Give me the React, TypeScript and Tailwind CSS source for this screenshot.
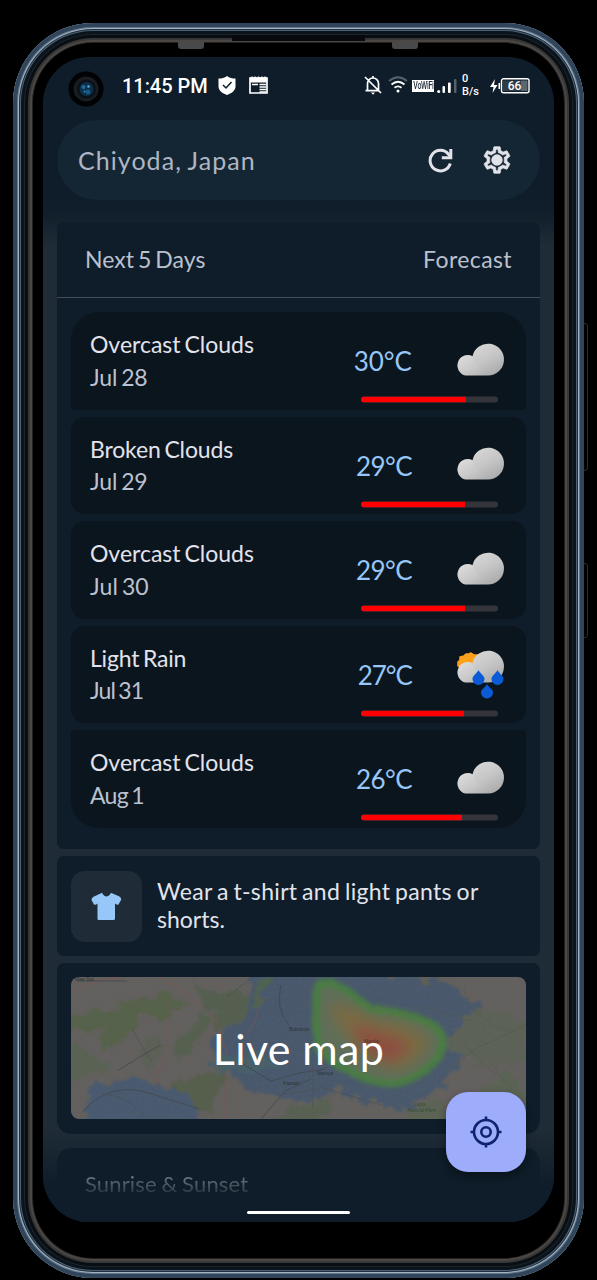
import React from "react";
import { MdOutlineSettings } from "react-icons/md";

const days = [
  { name: "Overcast Clouds", date: "Jul 28", temp: "30°C", fill: 77, rain: false, shape: "rounded-t-[28px] rounded-b-[4px]", nameTrack: "tracking-[0px]", dateTrack: "tracking-[-0.1px]", tempTrack: "tracking-[0px]" },
  { name: "Broken Clouds", date: "Jul 29", temp: "29°C", fill: 76, rain: false, shape: "rounded-[14px]", nameTrack: "tracking-[-0.15px]", dateTrack: "tracking-[-0.1px]", tempTrack: "tracking-[-0.6px]" },
  { name: "Overcast Clouds", date: "Jul 30", temp: "29°C", fill: 76, rain: false, shape: "rounded-[14px]", nameTrack: "tracking-[0px]", dateTrack: "tracking-[0.1px]", tempTrack: "tracking-[-0.6px]" },
  { name: "Light Rain", date: "Jul 31", temp: "27°C", fill: 75, rain: true, shape: "rounded-[14px]", nameTrack: "tracking-[-0.2px]", dateTrack: "tracking-[-0.8px]", tempTrack: "tracking-[-1px]" },
  { name: "Overcast Clouds", date: "Aug 1", temp: "26°C", fill: 74, rain: false, shape: "rounded-t-[4px] rounded-b-[28px]", nameTrack: "tracking-[0px]", dateTrack: "tracking-[-0.7px]", tempTrack: "tracking-[-0.6px]" },
];

function WeatherIcon({ rain }: { rain: boolean }) {
  return (
    <svg width="48" height="48" viewBox="0 0 48 48" className={rain ? "-mt-[2px] overflow-visible" : "mt-[10px] overflow-visible"}>
      <defs>
        <linearGradient id="cloud" x1="0.1" y1="0" x2="0.9" y2="1">
          <stop offset="0" stopColor="#dedede" />
          <stop offset="0.55" stopColor="#c6c6c6" />
          <stop offset="1" stopColor="#a6a6a6" />
        </linearGradient>
        <linearGradient id="cloudFront" x1="0" y1="0" x2="1" y2="1">
          <stop offset="0" stopColor="#ececec" />
          <stop offset="1" stopColor="#c9c9c9" stopOpacity="0" />
        </linearGradient>
      </defs>
      {rain && (
        <path d="M2 16 L2 12 L4 10 L4 7 L8 6 L10 4 L13 4 L15 3 L18 5 L23 5 L18 18 Z" fill="#ffa01c" stroke="#ffa01c" strokeWidth="1.5" strokeLinejoin="round" />
      )}
      <path d="M9.500 32.500a10.300 10.300 0 1 1 7-19.200A15.900 15.900 0 1 1 32 32.500Z" fill="url(#cloud)" />
      <path d="M9.500 32.500a10.300 10.300 0 1 1 7-19.200q1 6.700 9 11.700l6 7.500Z" fill="url(#cloudFront)" opacity="0.4" />
      {rain && (
        <g fill="#0b5bd7">
          <path d="M22.500 20c2 4 6 5.500 6 9a6 6 0 0 1-12 0c0-3.500 4-5 6-9Z" />
          <path d="M41.500 20c2 4 6 5.500 6 9a6 6 0 0 1-12 0c0-3.500 4-5 6-9Z" />
          <path d="M31 34c2 4 6 5 6 8.500a6 6 0 0 1-12 0c0-3.500 4-4.500 6-8.500Z" />
        </g>
      )}
    </svg>
  );
}

function StatusBar() {
  return (
    <div className="flex h-[63px] shrink-0 items-start pl-[25px] pr-[24px] pt-[14px] text-white">
      <svg width="36" height="36" viewBox="0 0 36 36">
        <circle cx="18" cy="18" r="17.500" fill="#010204" />
        <circle cx="18" cy="18" r="12.500" fill="#191c20" />
        <circle cx="18.500" cy="18" r="9.500" fill="#0b1119" />
        <circle cx="18.500" cy="18" r="7" fill="#0d304a" />
        <circle cx="15.500" cy="16" r="2" fill="#1e6b98" />
        <circle cx="20" cy="21" r="2.400" fill="#195a84" />
        <circle cx="20.500" cy="15.500" r="1.300" fill="#5ea5c8" />
        <circle cx="16.500" cy="20.500" r="1" fill="#3c8ab4" />
      </svg>
      <div className="ml-[18px] mt-[3px] w-[92px] whitespace-nowrap font-['Roboto'] text-[20px] font-medium leading-[24px] tracking-[-0.05px]">11:45 PM</div>
      <svg className="mt-[4px] ml-[2.500px]" width="20" height="22" viewBox="0 0 20 22">
        <path d="M10 1c2.500 2 5 2.500 8.500 2.500v8c0 4-4 7-8.500 8.500C5.500 18.500 1.500 15.500 1.500 11.500v-8C5 3.500 7.500 3 10 1Z" fill="#fff" />
        <path d="m6 10 3 3 5.500-6" fill="none" stroke="#0e1d29" strokeWidth="1.500" />
      </svg>
      <svg className="mt-[5px] ml-[12px]" width="19" height="19" viewBox="0 0 19 19">
        <path d="M1 2h17v15H1Z" fill="none" stroke="#fff" strokeWidth="1.700" />
        <path d="M1 1.500h17v5H1Z" fill="#fff" />
        <path d="M3 2V.500M6 2V.500M9.500 2V.500M13 2V.500M16 2V.500" stroke="#fff" strokeWidth="1.400" />
        <path d="M3 8.500h6M10.500 8.500h6.500M10.500 11h6.500M10.500 13.500h6.500M10.500 16h6.500" stroke="#fff" strokeWidth="1.300" />
      </svg>
      <div className="flex-1" />
      <svg className="mt-[4px]" width="20" height="21" viewBox="0 0 20 21" fill="none" stroke="#fff" strokeWidth="1.700">
        <path d="M4.500 15.500V8.500a5.500 5.500 0 0 1 11 0v7M2.500 15.700h13.500M2 2l16 16M10 1v2" />
        <path d="M8 17.500h4l-2 2.300Z" fill="#fff" stroke="none" />
      </svg>
      <svg className="mt-[5px] ml-[5px]" width="20" height="18" viewBox="0 0 20 18" fill="none" stroke="#fff" strokeWidth="1.800">
        <path d="M1 5q9-7.500 18 0" opacity="0.3" />
        <path d="M3.500 8.500q6.500-5.500 13 0M6.500 11.800q3.500-2.800 7 0" />
        <circle cx="10" cy="15" r="1.500" fill="#fff" stroke="none" />
      </svg>
      <div className="mt-[9px] ml-[4px] flex h-[12px] w-[22px] items-center justify-center bg-white font-['Roboto'] text-[10px] font-medium leading-[12px] tracking-[-0.4px] text-[#26323c]">
        <span className="inline-block scale-x-[0.7]">VoWiFi</span>
      </div>
      <svg className="mt-[7px] ml-[3px]" width="20" height="16" viewBox="0 0 20 16" fill="#fff">
        <circle cx="1.700" cy="13.500" r="1.500" />
        <rect x="5.500" y="8" width="2.500" height="7" rx="1" />
        <rect x="11" y="4.500" width="2.700" height="10.500" rx="1" />
        <rect x="17" y="1" width="2.500" height="14" rx="1" opacity="0.3" />
      </svg>
      <div className="ml-[5px] mt-[1px] w-[19px] whitespace-nowrap font-['Roboto'] text-[11px] font-medium leading-[13px]">
        0<br />B/s
      </div>
      <svg className="ml-[8px] mt-[7px]" width="41" height="16" viewBox="0 0 41 16">
        <path d="M6 1 1 9h3.500L3.500 15l5-8H5Z" fill="#fff" />
        <path d="M10.300 5v6" stroke="#fff" strokeWidth="1.600" />
        <rect x="12.500" y="0.800" width="27.500" height="14" rx="2" fill="none" stroke="#fff" strokeWidth="1.400" />
        <rect x="14" y="2.500" width="18" height="10.500" fill="#2f3c47" />
        <rect x="32" y="2.500" width="6.500" height="10.500" fill="#5b6770" />
        <text x="25.500" y="12.200" textAnchor="middle" fontFamily="Roboto" fontSize="12" fontWeight="500" fill="#fff">66</text>
      </svg>
    </div>
  );
}

function MapArt() {
  return (
    <svg className="absolute inset-0" width="455" height="142" viewBox="0 0 455 142">
      <defs>
        <filter id="rough" x="-10%" y="-10%" width="120%" height="120%">
          <feTurbulence type="fractalNoise" baseFrequency="0.07" numOctaves="5" seed="8" />
          <feDisplacementMap in="SourceGraphic" scale="22" xChannelSelector="R" yChannelSelector="G" />
          <feGaussianBlur stdDeviation="1" />
        </filter>
        <filter id="soft" x="-20%" y="-20%" width="140%" height="140%">
          <feTurbulence type="fractalNoise" baseFrequency="0.2" numOctaves="2" seed="3" />
          <feDisplacementMap in="SourceGraphic" scale="5" xChannelSelector="R" yChannelSelector="G" result="d" />
          <feGaussianBlur in="d" stdDeviation="2" />
        </filter>
        <filter id="heat" x="-40%" y="-40%" width="180%" height="180%">
          <feGaussianBlur stdDeviation="7" />
        </filter>
        <filter id="grain" x="0" y="0" width="100%" height="100%">
          <feTurbulence type="fractalNoise" baseFrequency="0.35" numOctaves="3" seed="12" />
          <feColorMatrix values="0 0 0 0 0.12  0 0 0 0 0.16  0 0 0 0 0.18  0 0 0 1.6 -0.7" />
        </filter>
      </defs>
      <rect width="455" height="142" fill="#63605e" />
      <g filter="url(#rough)">
        <path d="M-5 40Q30 34 58 24T112 20Q125 24 100 38L68 42Q52 70 34 74Q26 66 34 50L-5 56Z" fill="#566249" />
        <path d="M-5 68Q18 74 38 90L26 98L-5 106Z" fill="#5a6252" />
        <path d="M120 5Q150 22 190 12L184 44L150 52L138 34Z" fill="#545f50" />
        <path d="M100 82Q110 54 136 36L142 50Q130 58 120 76Z" fill="#57604f" />
        <path d="M72 60L90 58L84 90L72 84Z" fill="#5c6054" />
        <path d="M100 110L130 96L160 88L136 136L116 126Z" fill="#575e4b" />
        <path d="M176 -8H262V120Q210 132 168 106Q156 92 142 76L134 64L176 42Z" fill="#48596c" />
        <path d="M14 142Q14 98 34 102Q76 100 116 118L132 150H8Z" fill="#485a70" />
        <path d="M196 148Q226 122 262 124L240 150Z" fill="#586051" />
        <path d="M142 82L180 74L214 90L150 96Z" fill="#46606a" />
        <path d="M186 0L200 0L190 30L180 34Z" fill="#50634f" />
        <path d="M230 84Q258 112 304 128T392 84Q430 48 402 22T260-8Z" fill="#48596c" />
        <path d="M396 36q26-6 60 10v30q-24 26-50 4-24-2-30-14Z" fill="#5d6257" />
        <path d="M408 108q24-18 46-2v20h-46Z" fill="#5a6353" />
        <path d="M346 -2q40 4 52 22l8 14-14-22-38-10Z" fill="#5e5f54" />
        <path d="M332 136q20-12 42-10l20 24h-60Z" fill="#5c6353" />
      </g>
      <g filter="url(#soft)">
        <path d="M247 8Q262 2 278 16L300 32Q356 38 370 56Q378 80 346 98Q326 112 296 102Q264 90 248 72Q242 42 247 8Z" fill="#5f6e58" stroke="#4a7d42" strokeWidth="8" />
      </g>
      <g filter="url(#heat)">
        <path d="M256 28Q276 24 300 42Q346 46 358 64Q348 90 322 92Q284 82 256 28Z" fill="#80693f" opacity="0.9" />
        <path d="M280 48Q304 50 338 66Q334 86 312 84Q290 76 280 48Z" fill="#904b3e" opacity="0.9" />
      </g>
      <rect width="455" height="142" filter="url(#grain)" opacity="0.28" />
      <g fill="none" strokeWidth="0.9" opacity="0.75">
        <path d="M0 16Q24 2 50 0M88 0Q126 18 146 44L156 78M98 22Q100 60 92 86Q84 98 86 112M154 96V142M176 58Q188 40 190 20" stroke="#7f5651" />
        <path d="M6 4L56 4M12 134Q40 104 78 116L128 132M46 94L72 78L90 68M170 86L200 104L228 96L254 92M210 8Q204 32 218 48M190 142L214 114L240 102" stroke="#41444b" />
        <path d="M372 96L404 72L455 48M392 12Q410 50 438 54M348 28L400 44M424 142L440 112L418 84M388 62L424 98" stroke="#555952" />
        <path d="M242 90V132M250 110L310 128M156 20L182 0M60 50L80 84M30 116Q60 120 74 140M206 118L248 112" stroke="#4d5054" />
      </g>
      <g fill="#2d3337" fontFamily="Liberation Sans" fontSize="5">
        <text x="4" y="4">Mae Sot</text>
        <text x="218" y="54">Bukidnon</text>
        <text x="246" y="98">Naruya</text>
        <text x="212" y="108">Kawasi</text>
        <text x="293" y="66" fill="#582f26">Manila</text>
        <text x="343" y="129" fill="#35502e">Lapis</text>
        <text x="337" y="135" fill="#35502e">Natural Park</text>
      </g>
    </svg>
  );
}

function Screen() {
  return (
    <div className="relative flex h-[1165px] w-[511px] flex-col overflow-hidden rounded-t-[46px] rounded-b-[46px] bg-[#0e1d29]">
      <StatusBar />
      <div className="mx-[14px] flex h-[80px] shrink-0 items-center rounded-full bg-[#142633] pl-[21px] pr-[27px]">
        <div className="flex-1 whitespace-nowrap text-[25px] leading-[30px] tracking-[1.05px] text-[#afb6c3] [word-spacing:-1px]">Chiyoda, Japan</div>
        <svg width="25" height="25" viewBox="0 0 25 25" fill="none" stroke="#e2e3ea" strokeWidth="3">
          <path d="M22.300 15.500A10.300 10.300 0 1 1 20.500 6.200L23 9" />
          <path d="M22.800 1v8.700h-9" />
        </svg>
        <svg className="ml-[28px]" width="32" height="32" viewBox="0 0 32 32">
          <MdOutlineSettings size={32} color="#e2e3ea" stroke="#e2e3ea" strokeWidth={0.5} className="[&_path[fill='none']]:stroke-none" />
          <circle cx="16" cy="16" r="5" fill="#e2e3ea" />
        </svg>
      </div>
      <div className="flex flex-1 flex-col bg-[linear-gradient(180deg,#0e1d29_0px,#101f2b_14px,#1f2c38_46px,#1f2c38_930px,#0e1d29_985px)] px-[14px] pt-[22px]">
        <div className="flex h-[627px] shrink-0 flex-col rounded-[7px] bg-[#0e1d29]">
          <div className="flex h-[76px] items-center justify-between border-b border-[#444d57] px-[28px] text-[23px] text-[#bcc1cf]">
            <span className="tracking-[0.05px] [word-spacing:-2px]">Next 5 Days</span>
            <span className="tracking-[0.4px]">Forecast</span>
          </div>
          <div className="flex flex-col gap-[7px] px-[14px] pt-[14px]">
            {days.map((d) => (
              <div key={d.date} className={`flex h-[97.6px] bg-[#0b151e] pl-[19px] pr-[22px] ${d.shape}`}>
                <div className="flex-1 whitespace-nowrap pt-[16px] text-[23px] leading-[32.500px] [word-spacing:-2px]">
                  <div className={`text-[#e2e3ec] ${d.nameTrack}`}>{d.name}</div>
                  <div className={`text-[#bcc1cf] ${d.dateTrack}`}>{d.date}</div>
                </div>
                <div className="flex w-[150px] flex-col">
                  <div className="flex h-[85px] items-center justify-between pt-[14px]">
                    <span className={`flex w-[58px] justify-end whitespace-nowrap text-[26px] text-[#97c6f8] ${d.tempTrack}`}>{d.temp}</span>
                    <WeatherIcon rain={d.rain} />
                  </div>
                  <div className="ml-[7px] h-[6px] w-[137px] -translate-y-[0.5px] overflow-hidden rounded-full bg-[#34343a]">
                    <div className="h-full rounded-l-full bg-[#ff0000]" style={{ width: `${d.fill}%` }} />
                  </div>
                </div>
              </div>
            ))}
          </div>
        </div>
        <div className="mt-[7px] flex h-[100px] shrink-0 items-center rounded-[7px] bg-[#0e1d29] px-[14px]">
          <div className="flex size-[71px] items-center justify-center rounded-[14px] bg-[#1f2c38]">
            <svg width="31" height="28" viewBox="0 0 31 28" fill="#97c6f8">
              <path d="M10 1.200Q11.500.500 12 2.500q3.500 4 7 0Q19.500.500 21 1.200l7 3q2 1 2.300 3.300l-2.800 5q-1 1-3.500-1v15q0 1.500-1.500 1.500h-15Q6.500 28 6.500 26.500V11.500q-2 2-3.500 1L.500 8Q.300 6 2.500 4.700Z" />
            </svg>
          </div>
          <div className="ml-[15px] whitespace-nowrap pb-[2px] text-[23px] leading-[28px] tracking-[0.32px] text-[#e2e3ec] [word-spacing:-1.500px]">Wear a t-shirt and light pants or<br /><span className="tracking-[0px]">shorts.</span></div>
        </div>
        <div className="mt-[7px] h-[171px] shrink-0 rounded-t-[7px] rounded-b-[14px] bg-[#0e1d29] p-[14px]">
          <div className="relative flex h-[142px] items-center justify-center overflow-hidden rounded-[8px]">
            <MapArt />
            <span className="relative whitespace-nowrap pt-[2px] text-[43px] leading-[44px] tracking-[0.35px] text-white">Live map</span>
          </div>
        </div>
        <div className="mt-[14px] h-[75px] shrink-0 rounded-t-[14px] bg-[linear-gradient(180deg,#0e1d29_0px,#0e1d29_75px)] pl-[28px] pt-[21px]">
          <div className="w-fit bg-[linear-gradient(180deg,#77808a_5px,#2c3844_24px)] bg-clip-text text-[22px] leading-[30px] tracking-[0.15px] text-transparent [word-spacing:-1px]">Sunrise &amp; Sunset</div>
        </div>
      </div>
      <div className="absolute top-[1035px] left-[403px] flex size-[80px] items-center justify-center rounded-[22px] bg-[#9dadfb] shadow-[0_4px_8px_rgba(0,0,0,0.4)]">
        <svg width="32" height="32" viewBox="0 0 32 32" fill="none" stroke="#10236b" strokeWidth="2.600">
          <circle cx="16" cy="16" r="12" />
          <circle cx="16" cy="16" r="4.700" />
          <path d="M16 0.500v4M16 27.500v4M0.500 16h4M27.500 16h4" />
        </svg>
      </div>
      <div className="absolute bottom-[8px] left-[204px] h-[3px] w-[103px] rounded-full bg-white" />
    </div>
  );
}

export default function App() {
  return (
    <div className="relative flex h-[1280px] w-[597px] overflow-hidden bg-black pt-[23px] pl-[13px] font-['Lato',sans-serif]">
      <div className="absolute top-[323px] left-[583px] h-[148px] w-[5px] rounded-r-[3px] border border-[#222e3b]" />
      <div className="absolute top-[563px] left-[583px] h-[75px] w-[5px] rounded-r-[3px] border border-[#222e3b]" />
      <div className="relative h-[1255px] w-[571px] rounded-[80px] bg-black pt-[34px] pl-[30px] shadow-[inset_0_0_0_4px_#31455a,inset_0_0_0_5px_#63788c,inset_0_0_0_6px_#a3b2c0,inset_0_0_0_7px_#20303f,inset_0_0_0_8px_#4b6074,inset_0_0_0_11px_#0b131b,inset_0_0_0_12px_#1b232b,inset_0_0_0_15px_#090e13,inset_0_0_0_17px_#373737,inset_0_0_0_19px_#4a4744,inset_0_0_0_20px_#242220]">
        <div className="absolute top-[12px] left-[219px] h-[6px] w-[133px] bg-[#07090c]" />
        <div className="absolute top-[19px] left-[165px] h-[7px] w-[26px] rounded-b-[3px] bg-[#494949]" />
        <div className="absolute top-[19px] left-[379px] h-[7px] w-[26px] rounded-b-[3px] bg-[#494949]" />
        <Screen />
      </div>
    </div>
  );
}
